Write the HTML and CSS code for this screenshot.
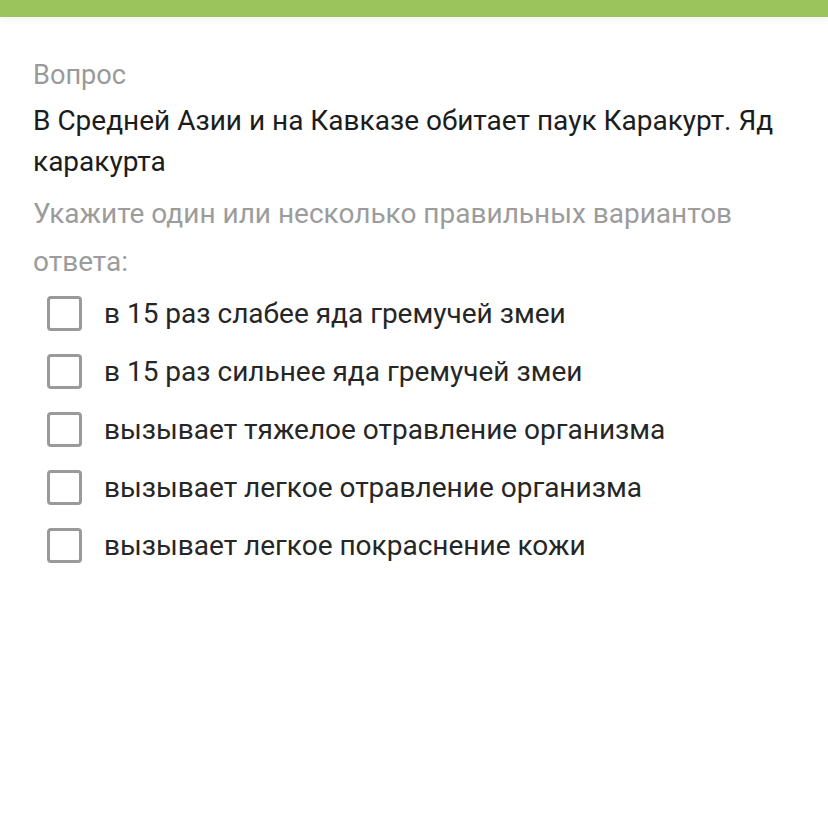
FILE: index.html
```html
<!DOCTYPE html>
<html lang="ru">
<head>
    <meta charset="UTF-8">
    <title>Вопрос</title>
    <link rel="stylesheet" href="styles.css">
</head>
<body>
    <div class="top-bar"></div>

    <div class="question">
        <p class="label">Вопрос</p>
        <p class="text">В Средней Азии и на Кавказе обитает паук Каракурт. Яд каракурта</p>
        <p class="hint">Укажите один или несколько правильных вариантов ответа:</p>

        <ul class="answers">
            <li><span class="box"></span>в 15 раз слабее яда гремучей змеи</li>
            <li><span class="box"></span>в 15 раз сильнее яда гремучей змеи</li>
            <li><span class="box"></span>вызывает тяжелое отравление организма</li>
            <li><span class="box"></span>вызывает легкое отравление организма</li>
            <li><span class="box"></span>вызывает легкое покраснение кожи</li>
        </ul>
    </div>
</body>
</html>
```

FILE: styles.css
```css
body {
    margin: 0;
    background: #fff;
    font-family: Roboto, "Noto Sans", sans-serif;
    color: #222;
}

.top-bar {
    height: 17px;
    background-color: #9bc45d;
    box-shadow: 0 4px 6px #f6f6f6;
}

.question {
    padding: 43px 33px 0 33px;
}

.label {
    margin: 0;
    font-size: 28px;
    line-height: 30px;
    color: #9a9a9a;
    transform: scaleX(0.97);
    transform-origin: left;
}

.text {
    margin: 10px 0 0 0;
    font-size: 28px;
    line-height: 41px;
    color: #1c1c1c;
}

.hint {
    margin: 8px 0 0 0;
    font-size: 28px;
    line-height: 48px;
    color: #9c9c9c;
}

.answers {
    list-style: none;
    margin: -2px 0 0 0;
    padding: 0 0 0 14px;
}

.answers li {
    display: flex;
    align-items: center;
    gap: 22px;
    height: 58px;
    font-size: 28px;
    color: #262626;
}

.box {
    width: 29px;
    height: 29px;
    border: 3px solid #9a9a9a;
    border-radius: 4px;
    flex-shrink: 0;
}
```
